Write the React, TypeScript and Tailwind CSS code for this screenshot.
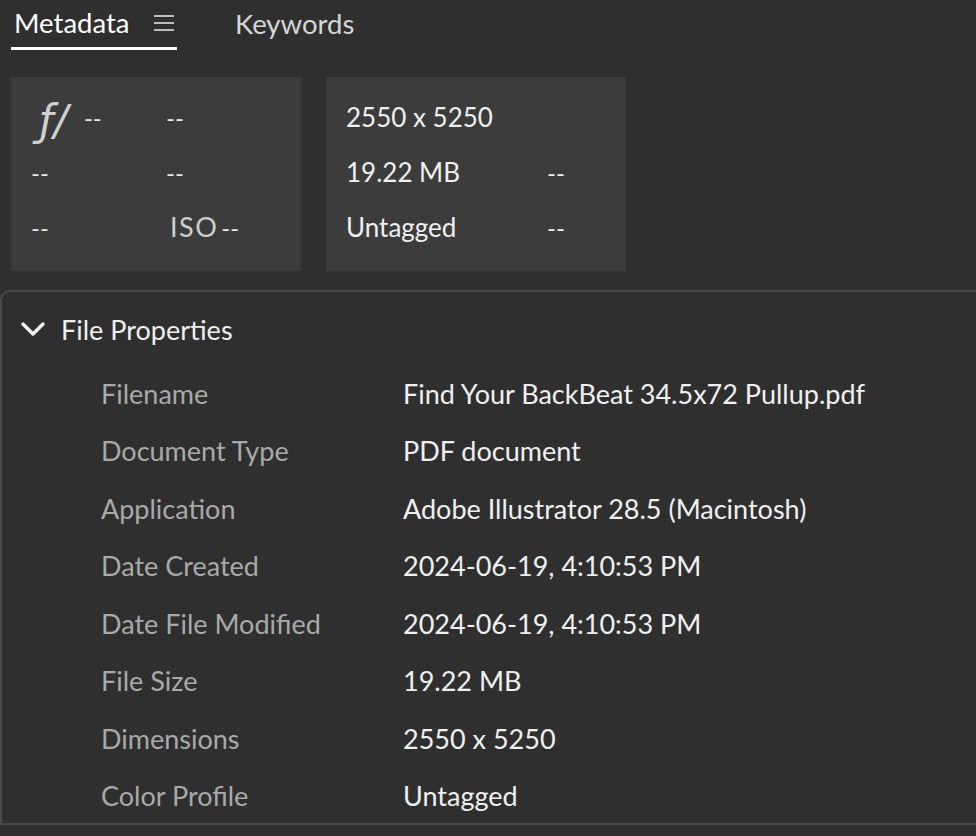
import React from "react";

const font = { fontFamily: "Lato, 'Open Sans', sans-serif" };

const rows: [string, string][] = [
  ["Filename", "Find Your BackBeat 34.5x72 Pullup.pdf"],
  ["Document Type", "PDF document"],
  ["Application", "Adobe Illustrator 28.5 (Macintosh)"],
  ["Date Created", "2024-06-19, 4:10:53 PM"],
  ["Date File Modified", "2024-06-19, 4:10:53 PM"],
  ["File Size", "19.22 MB"],
  ["Dimensions", "2550 x 5250"],
  ["Color Profile", "Untagged"],
];

export default function App() {
  return (
    <div
      className="w-[976px] h-[836px] overflow-hidden bg-[#2f2f2f] text-[#e8e8e8] flex flex-col"
      style={font}
    >
      {/* Tabs */}
      <div className="flex items-end h-[50px] pl-[11px]">
        <div className="flex items-center h-[50px] w-[166px] border-b-[3px] border-white pl-[3px] pb-[2px]">
          <span className="text-[27.5px] text-white leading-none">Metadata</span>
          <svg className="ml-[25px]" width="20" height="18" viewBox="0 0 20 18">
            <rect x="0" y="1" width="20" height="2" fill="#bdbdbd" />
            <rect x="0" y="8" width="20" height="2" fill="#bdbdbd" />
            <rect x="0" y="15" width="20" height="2" fill="#bdbdbd" />
          </svg>
        </div>
        <div className="flex items-center h-[50px] ml-[58px] pb-[2px]">
          <span className="text-[27.5px] text-[#d6d6d6] leading-none">Keywords</span>
        </div>
      </div>

      {/* Cards */}
      <div className="flex gap-[25px] pl-[11px] mt-[27px]">
        <div className="w-[290px] h-[194px] bg-[#3c3c3c] grid grid-cols-[135px_1fr] grid-rows-[55px_55px_55px] pl-[20px] pt-[13px] text-[24px] text-[#e8e8e8]">
          <div className="flex items-center">
            <span
              className="italic font-extralight text-[42px] text-[#d0d0d0] leading-none ml-[8px] translate-y-[3px]"
              style={{ fontFamily: "'DejaVu Sans', sans-serif" }}
            >
              ƒ/
            </span>
            <span className="ml-[16px]">--</span>
          </div>
          <div className="flex items-center">--</div>
          <div className="flex items-center">--</div>
          <div className="flex items-center">--</div>
          <div className="flex items-center">--</div>
          <div className="flex items-center">
            <span className="text-[#cfcfcf] text-[27px] tracking-[1.5px] mr-[3px] ml-[4px]">ISO</span>
            <span>--</span>
          </div>
        </div>
        <div className="w-[300px] h-[194px] bg-[#3c3c3c] grid grid-cols-[201px_1fr] grid-rows-[55px_55px_55px] pl-[20px] pt-[13px] text-[26px] text-[#f0f0f0]">
          <div className="flex items-center">2550 x 5250</div>
          <div />
          <div className="flex items-center">19.22 MB</div>
          <div className="flex items-center text-[24px]">--</div>
          <div className="flex items-center">Untagged</div>
          <div className="flex items-center text-[24px]">--</div>
        </div>
      </div>

      {/* File Properties section */}
      <div className="mt-[19px] border-t-2 border-l-2 border-b-2 border-[#4a4a4a] rounded-tl-[10px] flex flex-col">
        <div className="flex items-center h-[76px] pl-[18px] pb-[2px]">
          <svg width="26" height="18" viewBox="0 0 26 18" className="mr-[15px]">
            <path d="M3 4 L13 14 L23 4" stroke="#f0f0f0" strokeWidth="3.5" fill="none" strokeLinecap="round" strokeLinejoin="round" />
          </svg>
          <span className="text-[27px] text-[#f0f0f0] leading-none">File Properties</span>
        </div>
        <div className="flex flex-col gap-[5.5px]">
          {rows.map(([k, v]) => (
            <div key={k} className="flex items-center h-[52px] text-[27px]">
              <div className="w-[401px] pl-[99px] text-[#a9a9a9]">{k}</div>
              <div className="text-[#f0f0f0]">{v}</div>
            </div>
          ))}
        </div>
      </div>
    </div>
  );
}
